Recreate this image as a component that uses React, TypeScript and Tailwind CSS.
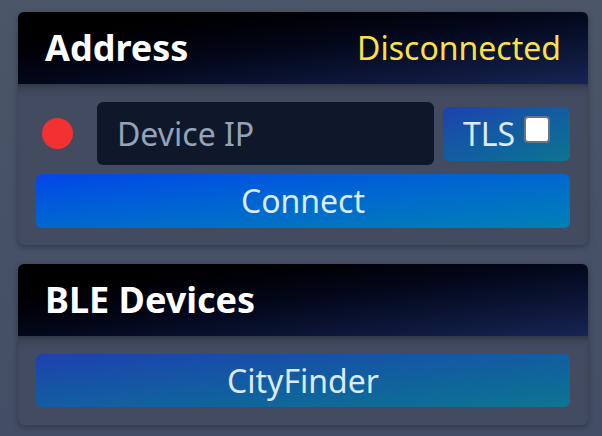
import React from "react";

const font = { fontFamily: '"Noto Sans", "Open Sans", sans-serif' };

function CardHeader({ title, status }: { title: string; status?: string }) {
  return (
    <div className="flex h-[72px] items-center justify-between rounded-t-[6px] bg-gradient-to-br from-[#000000] to-[#172554] pl-[27px] pr-[27px]">
      <h2 className="text-[36px] font-bold leading-none text-white">{title}</h2>
      {status ? (
        <span className="text-[32px] leading-none text-[#fde047]">{status}</span>
      ) : null}
    </div>
  );
}

export default function App() {
  return (
    <div
      className="flex min-h-[436px] flex-col gap-[19px] bg-gradient-to-b from-[#4b5669] to-[#434d64] pl-[18px] pr-[14px] pt-[12px] pb-[11px]"
      style={font}
    >
      <section className="rounded-[6px] bg-[#424b5f] shadow-[0_2px_6px_rgba(0,0,0,0.3)]">
        <CardHeader title="Address" status="Disconnected" />
        <div className="flex flex-col gap-[9px] px-[18px] pt-[18px] pb-[17px] shadow-[inset_0_8px_8px_-6px_rgba(0,0,0,0.35)]">
          <div className="flex h-[63px] items-center">
            <span className="ml-[6px] h-[31px] w-[31px] shrink-0 rounded-full bg-[#f43131]" />
            <input
              placeholder="Device IP"
              className="ml-[24px] h-[63px] min-w-0 flex-1 rounded-[6px] bg-[#0f172a] px-[20px] text-[32px] text-white outline-none placeholder:text-[#94a3b8]"
            />
            <label className="ml-[9px] flex h-[54px] w-[127px] shrink-0 items-start justify-center gap-[9px] rounded-[6px] bg-gradient-to-br from-[#1e40af] to-[#0e7490] pt-[5px] text-[32px] leading-[44px] text-[#dbeafe]">
              TLS
              <span className="mt-[4px] h-[27px] w-[26px] rounded-[4px] border-2 border-[#6b7280] bg-white" />
            </label>
          </div>
          <button className="h-[54px] w-full rounded-[6px] bg-gradient-to-br from-[#0a44e8] to-[#0380b5] text-[32px] leading-none text-[#dbeafe]">
            Connect
          </button>
        </div>
      </section>

      <section className="rounded-[6px] bg-[#424b5f] shadow-[0_2px_6px_rgba(0,0,0,0.3)]">
        <CardHeader title="BLE Devices" />
        <div className="px-[18px] pt-[18px] pb-[18px] shadow-[inset_0_8px_8px_-6px_rgba(0,0,0,0.35)]">
          <button className="h-[53px] w-full rounded-[6px] bg-gradient-to-br from-[#1e40af] to-[#0e7490] text-[32px] leading-none text-[#dbeafe]">
            CityFinder
          </button>
        </div>
      </section>
    </div>
  );
}
